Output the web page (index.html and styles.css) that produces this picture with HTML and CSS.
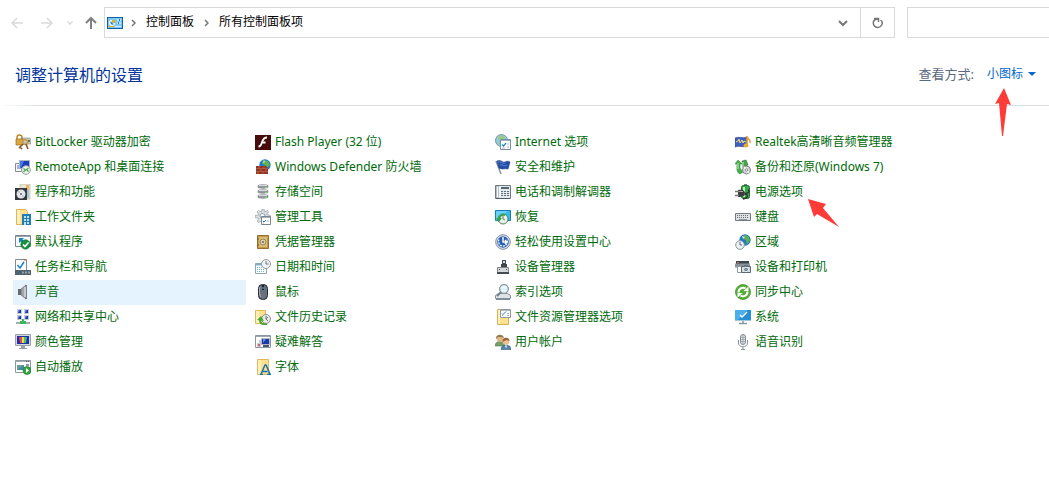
FILE: index.html
```html
<!DOCTYPE html>
<html lang="zh-CN">
<head>
    <meta charset="UTF-8">
    <meta name="viewport" content="width=device-width, initial-scale=1.0">
    <title>所有控制面板项</title>
    <link rel="stylesheet" href="styles.css">
</head>
<body>

    <!-- Navigation bar -->
    <header class="nav-bar">
        <div class="nav-buttons">
            <button type="button" class="nav-button disabled" aria-label="后退" disabled>
                <svg width="14" height="14" viewBox="0 0 14 14"><path d="M13 7H2M7 2L2 7l5 5"/></svg>
            </button>
            <button type="button" class="nav-button disabled" aria-label="前进" disabled>
                <svg width="14" height="14" viewBox="0 0 14 14"><path d="M1 7h11M7 2l5 5-5 5"/></svg>
            </button>
            <button type="button" class="nav-button disabled small" aria-label="最近浏览的位置" disabled>
                <svg width="8" height="14" viewBox="0 0 8 14"><path d="M1.500 5.500L4 8l2.500-2.500"/></svg>
            </button>
            <button type="button" class="nav-button up" aria-label="上移">
                <svg width="14" height="14" viewBox="0 0 14 14"><path d="M7 13V2M2 7l5-5 5 5"/></svg>
            </button>
        </div>

        <div class="address-bar">
            <svg class="address-icon" width="16" height="12" viewBox="0 0 16 12">
                <rect x=".5" y=".5" width="15" height="11" fill="#7cc9f5" stroke="#0c62a3"/>
                <path d="M5 3a3 3 0 1 0 3 3H5z" fill="#fff"/>
                <path d="M5.500 2.500a3 3 0 0 1 3 3h-3z" fill="#f5a800"/>
                <path d="M4 4a2 2 0 1 0 3 3L5 6z" fill="#1979ca"/>
                <path d="M10 3h4M10 6h4" stroke="#d9f1ff" stroke-width="1.500"/>
                <path d="M12 2h1v2h-1zM11 5h1v2h-1z" fill="#1979ca"/>
                <path d="M2 9.500h5" stroke="#f5a800"/><path d="M8 9.500h6" stroke="#d9f1ff"/>
            </svg>
            <svg class="crumb-arrow" width="5" height="8" viewBox="0 0 5 8"><path d="M1 1l3 3-3 3"/></svg>
            <a class="crumb" href="#">控制面板</a>
            <svg class="crumb-arrow" width="5" height="8" viewBox="0 0 5 8"><path d="M1 1l3 3-3 3"/></svg>
            <a class="crumb" href="#">所有控制面板项</a>
            <button type="button" class="address-button history" aria-label="以前的位置">
                <svg width="10" height="8" viewBox="0 0 10 8"><path d="M1 2l4 4 4-4"/></svg>
            </button>
            <button type="button" class="address-button refresh" aria-label="刷新">
                <svg width="12" height="12" viewBox="0 0 12 12"><path d="M2 1.500h4.500V5M6 2C1 2 .5 6 2.200 8.800c1.900 2.500 6 2.200 7.500-.8C10.700 6 10 4 8.500 3"/></svg>
            </button>
        </div>

        <input type="search" class="search-box" aria-label="搜索控制面板">
    </header>

    <!-- Title and view selector -->
    <div class="title-bar">
        <h1>调整计算机的设置</h1>
        <div class="view-by">
            <label for="view-select">查看方式:</label>
            <div class="view-menu">
                <select id="view-select">
                    <option>类别</option>
                    <option>大图标</option>
                    <option selected>小图标</option>
                </select>
                <svg class="view-caret" width="8" height="4" viewBox="0 0 8 4"><path d="M0 0h8L4 4z" fill="#0066cc"/></svg>
                <svg class="pointer pointer-up" width="16" height="49" viewBox="0 0 16 49"><path d="M9 0l7 17-4-1-4 32H7L4 15l-4 1z" fill="#ff3b38"/></svg>
            </div>
        </div>
    </div>

    <!-- All items -->
    <main>
        <ul class="item-list">
            <li><a href="#">
                <svg viewBox="0 0 16 16"><path d="M6 4h9l1 2v4H7z" fill="#c5c5c5" stroke="#888" stroke-width=".6"/><path d="M13 6h2v2h-2z" fill="#5a7b50"/><path d="M2 6V3.500C2 0 7 0 7 3.500V6" fill="none" stroke="#b98a2c" stroke-width="1.500"/><path d="M1 5h7v6H1z" fill="#dca743" stroke="#9c6c15" stroke-width=".7"/><circle cx="10" cy="8" r="2.500" fill="none" stroke="#c99d4f" stroke-width="1.700"/><path d="M8 10l-4 4M11 10l2 5M5 13l2 2" stroke="#815a29" stroke-width="1.600"/></svg>
                BitLocker 驱动器加密</a></li>
            <li><a href="#">
                <svg viewBox="0 0 16 16"><path d="M0 1h16v15H0z" fill="#480b0b"/><path d="M12 3.500C8 3.500 7.500 7 6.500 9.500 6 11.500 5 12.500 3.500 12.500M7 8.500h3.500" stroke="#fff" stroke-width="1.800" fill="none"/></svg>
                Flash Player (32 位)</a></li>
            <li><a href="#">
                <svg viewBox="0 0 16 16"><circle cx="6.500" cy="6.500" r="6" fill="#8ccbed" stroke="#7b97a8"/><path d="M3 3l4-2 3 2-2 3-4 1zM2 8l4 1v3z" fill="#9dcb7e"/><path d="M5.500 5.500h10v10h-10z" fill="#fff" stroke="#77909f"/><path d="M6 6.500h9" stroke="#96b4c8"/><path d="M7 10.500l1.500 1.500L11 9" fill="none" stroke="#2385d1" stroke-width="1.200"/><path d="M12 10h2M12 13h2M7 14h3" stroke="#b0b8be"/></svg>
                Internet 选项</a></li>
            <li><a href="#">
                <svg viewBox="0 0 16 16"><path d="M0 4c4-2 8 1 12-1v9c-4 2-8-1-12 1z" fill="#3c5fc0" stroke="#28408a" stroke-width=".6"/><path d="M1 8l2-1 1-2 1 4 2-3 1 3 1-2 2 1" fill="none" stroke="#f6dc7b"/><path d="M12 2c0 3 4 3 3 7M12 2v9" fill="none" stroke="#e5a02f" stroke-width="1.500"/><ellipse cx="11" cy="11.500" rx="2.500" ry="2" fill="#e9a631"/></svg>
                Realtek高清晰音频管理器</a></li>

            <li><a href="#">
                <svg viewBox="0 0 16 16"><path d="M.5 4.500h6v8h-6z" fill="#f4f6fb" stroke="#889"/><path d="M2 7h3M2 9h3" stroke="#4b76bd"/><path d="M4.500 1.500h10v8h-10z" fill="#193fc0" stroke="#aeb3c5"/><path d="M5 2h4L6 9H5z" fill="#4b74df"/><circle cx="11" cy="11" r="4.300" fill="#eef2ee" stroke="#9ba39c"/><path d="M8.500 9.500l2 1.500-2 2M13.500 9l-2 1.500 2 2" fill="none" stroke="#48a657" stroke-width="1.200"/></svg>
                RemoteApp 和桌面连接</a></li>
            <li><a href="#">
                <svg viewBox="0 0 16 16"><circle cx="10" cy="6" r="5.700" fill="#2375d0"/><path d="M8 1l5 1 2 4-3 3-2-3-3-1z" fill="#61b54b"/><path d="M9 1l1 2-2 1z" fill="#d2efff"/><path d="M1 7h10l2 2v6H1z" fill="#943423"/><path d="M1 9.500h12M1 12.500h12M4 7v2.500M9 7v2.500M6 10v2.500M11 10v2.500M3 13v2M8 13v2" stroke="#c77b64" stroke-width=".5"/></svg>
                Windows Defender 防火墙</a></li>
            <li><a href="#">
                <svg viewBox="0 0 16 16"><path d="M1 2l5 13" stroke="#8091ab" stroke-width="1.500"/><path d="M2 2c4-2 5 2 8 1 2-1 3-1 5 0L13 10c-3-1-5 1-9-1z" fill="#244fa9" stroke="#183b83" stroke-width=".6"/><path d="M3 3c3-1 4 2 7 1M5 6c3-1 3 2 7 0" fill="none" stroke="#5c86d4"/></svg>
                安全和维护</a></li>
            <li><a href="#">
                <svg viewBox="0 0 16 16"><path d="M0 5l3-4 4 4H5v4l3 4-3 2C1 13 2 9 2 5z" fill="#48b04b" stroke="#28752e" stroke-width=".5"/><path d="M7 2l4-1 2 5-2 1v5L8 9z" fill="#48a24b" stroke="#28752e" stroke-width=".6"/><path d="M8 3v5M3 4v6" stroke="#c7ecbf"/><circle cx="11.500" cy="11" r="4" fill="#d8dadc" stroke="#808386"/><path d="M9 8l5 6" stroke="#f8f8f8" stroke-width="1.500"/><circle cx="11.500" cy="11" r="1.300" fill="#fff" stroke="#888"/></svg>
                备份和还原(Windows 7)</a></li>

            <li><a href="#">
                <svg viewBox="0 0 16 16"><path d="M5 0h10v15H5z" fill="#eee7cf" stroke="#b7ad95" stroke-width=".6"/><path d="M11 1h3v5h-3z" fill="#e0ba7b"/><path d="M11 6h3v8h-3z" fill="#9fc7d8"/><path d="M0 4h12v12H0z" fill="#35383d"/><circle cx="6" cy="10" r="4.500" fill="#dfe3e6"/><path d="M3 7l3 3 3 3" stroke="#bcc4cc" stroke-width="1.500"/><circle cx="6" cy="10" r="1.500" fill="#42474e" stroke="#fff"/></svg>
                程序和功能</a></li>
            <li><a href="#">
                <svg viewBox="0 0 16 16"><g fill="#94999f" stroke="#777b80" stroke-width=".6"><path d="M3 1.500c1-1 9-1 10 0v2c-2 1-8 1-10 0z"/><path d="M3 6.500c1-1 9-1 10 0v2c-2 1-8 1-10 0z"/><path d="M3 11.500c1-1 9-1 10 0v2c-2 1-8 1-10 0z"/></g><path d="M4 1.500h8M4 6.500h8M4 11.500h8" stroke="#d8dbde"/><path d="M10 3.500h2M10 8.500h2M10 13.500h2" stroke="#75e16b"/></svg>
                存储空间</a></li>
            <li><a href="#">
                <svg viewBox="0 0 16 16"><path d="M.5 1.500h15v13H.5z" fill="#e4e9ec" stroke="#6e7b84"/><path d="M1 2h3v12H1z" fill="#b3bec7"/><path d="M6 4h8" stroke="#566773" stroke-width="2"/><path d="M6 7.500h8M6 9.500h8M6 11.500h8" stroke="#5e707d" stroke-dasharray="2 1"/><path d="M2.500 3v10M5 2v12" stroke="#fff"/><path d="M1 14.500h14" stroke="#4a5b67"/></svg>
                电话和调制解调器</a></li>
            <li class="power"><a href="#">
                <svg viewBox="0 0 16 16"><path d="M9 0h3v2H9z" fill="#7e8780"/><rect x="6.500" y="1.500" width="8" height="13" rx="2" fill="#38a84c" stroke="#1f6f2c"/><path d="M9 3v10" stroke="#c2efc7" stroke-width="2"/><path d="M3 6c5-1 7 1 7 3.500S8 13 3 13z" fill="#3b3d3e"/><path d="M0 7.500h4M0 11.500h4" stroke="#777" stroke-width="1.500"/><path d="M10 9.500c5 0 4-3 3-4M10 10c4 1 3 4-2 5" fill="none" stroke="#333" stroke-width="1.300"/><path d="M4 7.500h4" stroke="#a5a7a8"/></svg>
                电源选项</a>
                <svg class="pointer pointer-diagonal" width="32" height="29" viewBox="0 0 32 29"><path d="M0 0l18 5-3 4 16 19L9 15l-3 3z" fill="#ff3b38"/></svg>
            </li>

            <li><a href="#">
                <svg viewBox="0 0 16 16"><path d="M1.500.5h9l2 2v13h-11z" fill="#ffe08d" stroke="#ddb55d"/><path d="M2 1h3v14H2z" fill="#fff0b9"/><path d="M7 5h9v11H7z" fill="#247bb5"/><path d="M9 7h2v2H9zM12 7h2v2h-2zM9 10h2v2H9zM12 10h2v2h-2zM9 13h2v3H9zM12 13h2v2h-2z" fill="#b6e4fb"/></svg>
                工作文件夹</a></li>
            <li><a href="#">
                <svg viewBox="0 0 16 16"><path d="M7 0h2l.5 3 3-1.500 1 1.500-2 2.500 4 1v2l-4 .5-2 3-1 3H7l-.5-3-3 1.500L2 12l2-2.500-4-1v-2L4 6 2 3l1.500-1.500L6.500 3z" fill="#dde1e4" stroke="#929ca3" stroke-width=".7"/><circle cx="7.500" cy="7" r="2.500" fill="#fff" stroke="#929ca3"/><path d="M6.500 7.500h9v8h-9z" fill="#fff" stroke="#798590"/><path d="M7 8.500h8" stroke="#aab5bd"/><path d="M8 12l1 1 2-2" fill="none" stroke="#1682d4"/><path d="M12 12h2M8 14h1" stroke="#aaa"/></svg>
                管理工具</a></li>
            <li><a href="#">
                <svg viewBox="0 0 16 16"><path d="M.5 1.500h15v10H.5z" fill="#39b6ee" stroke="#177cad"/><path d="M1 2h12L3 11H1z" fill="#66d1fa"/><circle cx="8" cy="10" r="5" fill="#e8f0e9" stroke="#52865a"/><path d="M8 7v3l2 1" fill="none" stroke="#697d6c"/><path d="M4 10a4.500 4.500 0 0 1 6-4" fill="none" stroke="#34a249" stroke-width="2"/><path d="M1 9h6l-3 4z" fill="#34a249"/></svg>
                恢复</a></li>
            <li><a href="#">
                <svg viewBox="0 0 16 16"><path d="M.5 4.500h15v7H.5z" fill="#dfe2e4" stroke="#747b82"/><path d="M2 6.500h12M2 8.500h12" stroke="#6b7278" stroke-dasharray="1 1"/><path d="M4 10.500h8" stroke="#8c9399"/></svg>
                键盘</a></li>

            <li><a href="#">
                <svg viewBox="0 0 16 16"><path d="M.5 1.500h15v11H.5z" fill="#fff" stroke="#78858e"/><path d="M1 2.500h14" stroke="#9aa6ae"/><path d="M4 4h5L7.500 5.500 10 8 8 10 5.500 7.500 4 9z" fill="#1685c9"/><circle cx="10.500" cy="10.500" r="4.700" fill="#16913e" stroke="#0c732d" stroke-width=".6"/><path d="M8 10.500l2 2 3.500-4" fill="none" stroke="#fff" stroke-width="1.600"/></svg>
                默认程序</a></li>
            <li><a href="#">
                <svg viewBox="0 0 16 16"><path d="M2.500 1.500h11v13h-11z" fill="#c49a48" stroke="#94712d"/><path d="M4 3h8v10H4z" fill="#dcc079"/><circle cx="8" cy="8" r="3" fill="#d8d2bd" stroke="#9c8450"/><circle cx="8" cy="8" r="1" fill="#7f6936"/><path d="M3 4v2M3 10v2" stroke="#76591f"/></svg>
                凭据管理器</a></li>
            <li><a href="#">
                <svg viewBox="0 0 16 16"><circle cx="8" cy="8" r="7.300" fill="#e3e8ef" stroke="#8089a0"/><circle cx="8" cy="8" r="5.800" fill="#2860b1"/><path d="M4 5.500a4.500 4.500 0 1 0 8 0" fill="none" stroke="#fff" stroke-width="1.200" stroke-dasharray="2 1"/><path d="M8 3v5h3M10 6l2 2-2 2" fill="none" stroke="#fff" stroke-width="1.400"/></svg>
                轻松使用设置中心</a></li>
            <li><a href="#">
                <svg viewBox="0 0 16 16"><circle cx="10" cy="6" r="5.700" fill="#2678c6"/><path d="M9 1l4 1 2 4-3 5-1-5-3-1z" fill="#5eb24d"/><path d="M7 2l3 1-2 2z" fill="#ceeaf8"/><circle cx="5" cy="11" r="4.300" fill="#edf1f3" stroke="#8b969e"/><path d="M5 8v3h2" fill="none" stroke="#577184"/></svg>
                区域</a></li>

            <li><a href="#">
                <svg viewBox="0 0 16 16"><path d="M.5.500h11v12H.5z" fill="#fff" stroke="#808c94"/><path d="M2.500 6L5 9l4-6" fill="none" stroke="#1684cc" stroke-width="1.500"/><path d="M9 1h2" stroke="#e34a3f"/><path d="M0 11h16v5H0z" fill="#50616f"/><path d="M7 13.500h2M10 13.500h2M13 13.500h2" stroke="#93a1ad" stroke-width="2"/></svg>
                任务栏和导航</a></li>
            <li><a href="#">
                <svg viewBox="0 0 16 16"><path d="M.5 4.500h11v10H.5z" fill="#fff" stroke="#92a4b0"/><path d="M1 5.500h10" stroke="#80afc7" stroke-width="2"/><path d="M2 8.500h8M2 10.500h8M2 12.500h8" stroke="#67b3d6" stroke-dasharray="1 1"/><circle cx="11" cy="5" r="4.500" fill="#f1f3f4" stroke="#909ba1"/><path d="M11 2v3h2.500" fill="none" stroke="#68767f"/></svg>
                日期和时间</a></li>
            <li><a href="#">
                <svg viewBox="0 0 16 16"><path d="M7 1h4v5H7z" fill="#4a4f53"/><path d="M8 2h2v2H8z" fill="#d2d8dc"/><path d="M6 5h6v4H6z" fill="#3f4549"/><path d="M2.500 8.500h11v5h-11z" fill="#d5d8db" stroke="#80868b"/><path d="M4 10h1v1H4zM11 10h1v1h-1z" fill="#474c50"/><path d="M2 14h12" stroke="#474c50" stroke-width="2"/></svg>
                设备管理器</a></li>
            <li><a href="#">
                <svg viewBox="0 0 16 16"><path d="M1 2h13v3H1z" fill="#3d464c"/><path d="M0 4.500h15v4H0z" fill="#87939a"/><path d="M2.500 7.500h4v6h-4z" fill="#fff" stroke="#8c999f"/><path d="M2 3.500h2" stroke="#d85d46"/><path d="M6.500 7.500h9v6h-9z" fill="#d6dde1" stroke="#5c6970"/><path d="M9 6h4v2H9z" fill="#647279"/><circle cx="11" cy="10.500" r="2.200" fill="#42515a" stroke="#eef4f8"/><circle cx="11" cy="10.500" r="1" fill="#8dc3e0"/></svg>
                设备和打印机</a></li>

            <li class="selected"><a href="#">
                <svg viewBox="0 0 16 16"><path d="M3 5h3v6H3z" fill="#666b70"/><path d="M6 5l5-4v14l-5-4z" fill="#a2a6aa" stroke="#666b70" stroke-width=".7"/><path d="M9 3h2v10H9z" fill="#c9cccf"/><path d="M11 1h1v14h-1z" fill="#7b8084"/></svg>
                声音</a></li>
            <li><a href="#">
                <svg viewBox="0 0 16 16"><rect x="3.500" y=".5" width="9" height="15" rx="4" fill="#686f7d" stroke="#242830"/><path d="M5 3c-1 3-1 8 1 10" fill="none" stroke="#aeb8c8"/><path d="M8 1v5" stroke="#1d2630" stroke-width="2"/><path d="M8 3v2" stroke="#5cb7ec"/></svg>
                鼠标</a></li>
            <li><a href="#">
                <svg viewBox="0 0 16 16"><path d="M1 15h14" stroke="#808c94" stroke-width="2"/><path d="M.5 14.500v-3l3-2h9l3 2v3z" fill="#dde3e7" stroke="#829099"/><circle cx="9" cy="5" r="4.300" fill="#e5f3fa" stroke="#8999a4" stroke-width="1.300"/><path d="M6 8l-4 4" stroke="#76838c" stroke-width="2"/><path d="M7 4c1-2 3-2 4-1" fill="none" stroke="#fff"/></svg>
                索引选项</a></li>
            <li><a href="#">
                <svg viewBox="0 0 16 16"><circle cx="8" cy="8" r="7.600" fill="#57ae39" stroke="#318529" stroke-width=".6"/><path d="M3.500 8.500a4.500 4.500 0 0 1 7-4M12.500 7.500a4.500 4.500 0 0 1-7 4" fill="none" stroke="#fff" stroke-width="2"/><path d="M8.500 7h5V2.500zM7.500 9h-5v4.500z" fill="#fff"/></svg>
                同步中心</a></li>

            <li><a href="#">
                <svg viewBox="0 0 16 16"><g fill="#1e36aa" stroke="#c3cad6"><path d="M2.500.5h4v4h-4zM9.500.5h4v4h-4zM2.500 6.500h4v4h-4zM9.500 6.500h4v4h-4z"/></g><path d="M3 1h2L3 4zM10 1h2l-2 3zM3 7h2l-2 3zM10 7h2l-2 3z" fill="#6f8be7"/><path d="M1 14h14" stroke="#a3b0aa" stroke-width="2"/><path d="M7 10h2v2h2v3H5v-3h2z" fill="#39b95e"/></svg>
                网络和共享中心</a></li>
            <li><a href="#">
                <svg viewBox="0 0 16 16"><path d="M.5 1.500h10v13H.5z" fill="#ffe18f" stroke="#dfb85e"/><path d="M1 2h3v12H1z" fill="#fff0b9"/><circle cx="11" cy="10" r="4.500" fill="#e8eae7" stroke="#8b8f8a"/><path d="M11 7v3l2-2M13 12l-2-2" fill="none" stroke="#72766f"/><path d="M12 15c-5 1-7-1-7-4" fill="none" stroke="#44a83b" stroke-width="2"/><path d="M2 11l4-4 3 5z" fill="#44a83b"/></svg>
                文件历史记录</a></li>
            <li><a href="#">
                <svg viewBox="0 0 16 16"><path d="M2.500.5h11v15h-11z" fill="#ffe18f" stroke="#d5b157"/><path d="M3 1h2v14H3z" fill="#fff0b9"/><path d="M5.500.5h10v8h-10z" fill="#fff" stroke="#8b989f"/><path d="M6 1.500h9" stroke="#b2bec6"/><path d="M7 4.500l1 1 3-3" fill="none" stroke="#1783c5"/><path d="M12 4.500h2M7 6.500h1M12 6.500h2" stroke="#a3b0b8"/></svg>
                文件资源管理器选项</a></li>
            <li><a href="#">
                <svg viewBox="0 0 16 16"><path d="M0 1h16v10H0z" fill="#278ed4"/><path d="M0 1h12L3 11H0z" fill="#49b0eb"/><path d="M5 6l2 2 5-5" fill="none" stroke="#fff" stroke-width="1.500"/><path d="M0 11.500h16" stroke="#a9c4d3"/><path d="M8 12v2M4 14.500h8" stroke="#8199a7" stroke-width="1.500"/></svg>
                系统</a></li>

            <li><a href="#">
                <svg viewBox="0 0 16 16"><path d="M.5.500h15v11H.5z" fill="#d4d7dc" stroke="#9ba1ab"/><path d="M2 2h12v8H2z" fill="#202fa8"/><path d="M4 3h3v6H5z" fill="#e44762"/><path d="M7 3h2v6H7z" fill="#f4dc39"/><path d="M9 3h2v6H9z" fill="#39c66c"/><path d="M11 3h1l-1 6z" fill="#36a8ee"/><path d="M6 12h4v2h2v1H4v-1h2z" fill="#999ea7"/></svg>
                颜色管理</a></li>
            <li><a href="#">
                <svg viewBox="0 0 16 16"><path d="M.5 1.500h15v12H.5z" fill="#fff" stroke="#8a959f"/><path d="M1 2.500h14" stroke="#9ca6ad"/><path d="M4 6h2v7H4zM2 9h2v4H2z" fill="#c6ccd2"/><path d="M6.500 4.500h8v6h-8z" fill="#1a38aa" stroke="#adb5c5"/><path d="M8 5h3L8 9z" fill="#6888dc"/><path d="M8 12h6" stroke="#4a5768" stroke-width="2"/><path d="M3 11h2" stroke="#d85c59" stroke-width="2"/></svg>
                疑难解答</a></li>
            <li><a href="#">
                <svg viewBox="0 0 16 16"><path d="M0 12c0-6 9-6 10 0z" fill="#759e68" stroke="#56784e" stroke-width=".6"/><circle cx="5" cy="4.500" r="3.300" fill="#e3b48b"/><path d="M1 5C0 0 8-1 9 4L6 3 3 3z" fill="#8e7c48"/><path d="M6 15.500c0-6 10-6 10 0z" fill="#4e83ad" stroke="#385f83" stroke-width=".6"/><circle cx="11" cy="7.500" r="3.300" fill="#edc291"/><path d="M7.500 8c-1-5 7-6 7-1l-3-1z" fill="#97662d"/><path d="M10 11.500l1 3 1-3z" fill="#fff"/></svg>
                用户帐户</a></li>
            <li><a href="#">
                <svg viewBox="0 0 16 16"><rect x="5.500" y=".5" width="5" height="10" rx="2.500" fill="#e3e5e9" stroke="#80868f"/><path d="M5 3.500h6M5 5.500h6M5 7.500h6M8 1v9" stroke="#9298a0" stroke-width=".7"/><path d="M3.500 6v3c0 5 9 5 9 0V6M8 12.500V15M6 15.500h4" fill="none" stroke="#8b919d"/></svg>
                语音识别</a></li>

            <li><a href="#">
                <svg viewBox="0 0 16 16"><path d="M.5 1.500h15v12H.5z" fill="#fff" stroke="#8c989f"/><path d="M1 2.500h14" stroke="#a6b0b6"/><path d="M11 2.500h4" stroke="#59666e" stroke-dasharray="1 1"/><path d="M2 6h7v5H2z" fill="#438aa3"/><path d="M2 6h7l-7 5z" fill="#6c9c96"/><path d="M11 6h3" stroke="#88979f" stroke-width="2"/><circle cx="12" cy="11.500" r="4" fill="#31a342" stroke="#1c7d2b" stroke-width=".6"/><path d="M11 9l3 2.500-3 2.500z" fill="#fff"/></svg>
                自动播放</a></li>
            <li><a href="#">
                <svg viewBox="0 0 16 16"><path d="M2.500.5h11v15h-11z" fill="#ffe18f" stroke="#e0b95f"/><path d="M3 1h3v14H3z" fill="#fff0b9"/><path d="M6 15l4-9h1l4 9M7.500 12.500h5M5 15.500h3M12 15.500h4" fill="none" stroke="#1871ac" stroke-width="1.500"/></svg>
                字体</a></li>
        </ul>
    </main>

</body>
</html>
```
FILE: styles.css
```css
/* Global Styles */
* {
    box-sizing: border-box;
    margin: 0;
    padding: 0;
}

body {
    font-family: "Noto Sans", "Noto Sans CJK SC", sans-serif;
    font-size: 12px;
    background-color: #ffffff;
    color: #000000;
    overflow-x: hidden;
}

a {
    color: inherit;
    text-decoration: none;
}

button {
    border: none;
    background: none;
}

svg {
    display: block;
    flex: none;
}

/* Navigation bar */
.nav-bar {
    display: flex;
    padding-top: 7px;
}

.nav-buttons {
    display: flex;
    align-items: center;
    width: 104px;
    padding-left: 10px;
}

.nav-button {
    width: 14px;
    margin-right: 16px;
}

.nav-button.small {
    width: 8px;
    margin: 0 10px 0 -4px;
}

.nav-button.up {
    margin-right: 0;
}

.nav-button path {
    fill: none;
    stroke: #808080;
    stroke-width: 2;
}

.nav-button.disabled path {
    stroke: #dadada;
    stroke-width: 1.5;
}

.address-bar {
    display: flex;
    flex: 1;
    align-items: center;
    height: 31px;
    margin-right: 12px;
    padding-left: 2px;
    border: 1px solid #d9d9d9;
}

.crumb {
    padding-right: 2px;
    line-height: 16px;
    padding-bottom: 2px;
}

.crumb-arrow {
    margin: 0 10px 0 8px;
}

.crumb-arrow path,
.address-button path {
    fill: none;
    stroke: #777777;
    stroke-width: 1.5;
}

.address-button {
    display: flex;
    align-items: center;
    justify-content: center;
    width: 34px;
    height: 29px;
}

.address-button.history {
    margin-left: auto;
}

.address-button.history path {
    stroke-width: 2;
}

.address-button.refresh {
    border-left: 1px solid #d9d9d9;
}

.search-box {
    width: 142px;
    height: 31px;
    border: 1px solid #d9d9d9;
    border-right: none;
    border-radius: 0;
    outline: none;
}

/* Title and view selector */
.title-bar {
    display: flex;
    align-items: center;
    justify-content: space-between;
    height: 68px;
    padding: 4px 13px 0 15px;
    border-bottom: 1px solid;
    border-image: linear-gradient(to right, #ffffff, #d6e0ec 40px) 1;
}

.title-bar h1 {
    font-size: 16px;
    font-weight: normal;
    color: #003399;
}

.view-by {
    display: flex;
    align-items: center;
    gap: 13px;
    font-size: 13px;
    color: #5a6880;
}

.view-menu {
    position: relative;
    display: flex;
    align-items: center;
}

.view-menu select {
    appearance: none;
    width: 49px;
    border: none;
    background: none;
    font-family: inherit;
    font-size: 12px;
    color: #0066cc;
}

.view-caret {
    position: absolute;
    right: 0;
    pointer-events: none;
}

/* Red pointer arrows */
.pointer {
    position: absolute;
    pointer-events: none;
}

.pointer-up {
    top: 23px;
    left: 8px;
}

.pointer-diagonal {
    top: 19px;
    left: 75px;
}

/* Item list */
.item-list {
    display: grid;
    grid-template-columns: repeat(auto-fill, 233px);
    grid-auto-rows: 25px;
    column-gap: 7px;
    padding: 24px 13px;
    list-style: none;
}

.item-list li {
    position: relative;
}

.item-list a {
    display: flex;
    align-items: center;
    gap: 4px;
    height: 25px;
    padding: 0 0 1px 2px;
    line-height: 16px;
    color: #006a0a;
    white-space: nowrap;
}

.item-list a svg {
    width: 16px;
    height: 16px;
}

.item-list li.selected,
.item-list li:hover {
    background-color: #e5f3ff;
}
```
